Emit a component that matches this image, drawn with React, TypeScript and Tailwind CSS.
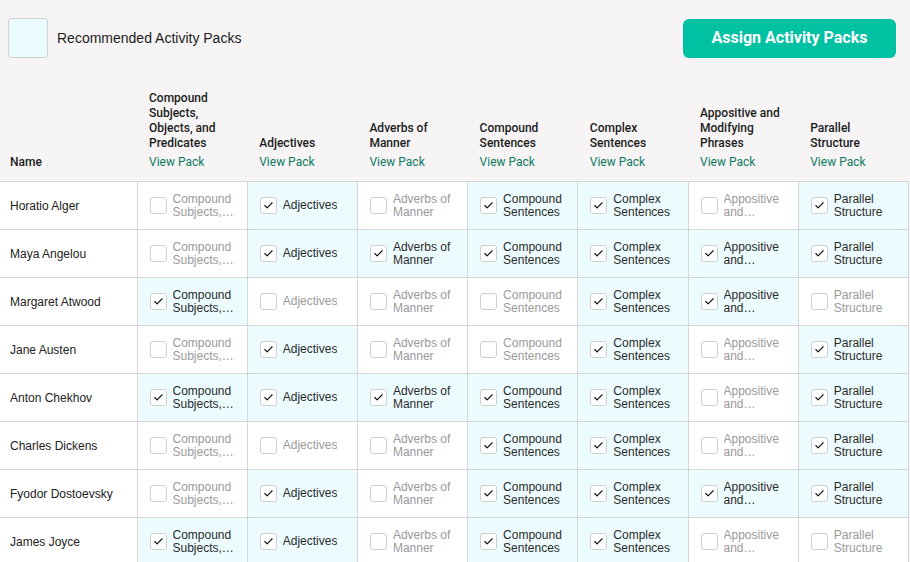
import { Check } from 'lucide-react'

const PACKS = [
  'Compound Subjects, Objects, and Predicates',
  'Adjectives',
  'Adverbs of Manner',
  'Compound Sentences',
  'Complex Sentences',
  'Appositive and Modifying Phrases',
  'Parallel Structure',
]

// 1 = pack recommended/assigned for that student, in PACKS order
const STUDENTS: { name: string; picks: number[] }[] = [
  { name: 'Horatio Alger', picks: [0, 1, 0, 1, 1, 0, 1] },
  { name: 'Maya Angelou', picks: [0, 1, 1, 1, 1, 1, 1] },
  { name: 'Margaret Atwood', picks: [1, 0, 0, 0, 1, 1, 0] },
  { name: 'Jane Austen', picks: [0, 1, 0, 0, 1, 0, 1] },
  { name: 'Anton Chekhov', picks: [1, 1, 1, 1, 1, 0, 1] },
  { name: 'Charles Dickens', picks: [0, 0, 0, 1, 1, 0, 1] },
  { name: 'Fyodor Dostoevsky', picks: [0, 1, 0, 1, 1, 1, 1] },
  { name: 'James Joyce', picks: [1, 1, 0, 1, 1, 0, 0] },
]

function PackCell({ label, checked }: { label: string; checked: boolean }) {
  return (
    <td
      className={`h-12 border border-[#d6d6d6] pl-3 pr-2 align-middle ${
        checked ? 'bg-[#ebfbfe]' : 'bg-white'
      }`}
    >
      <div className="flex items-center gap-[6px]">
        <span className="flex h-[17px] w-[17px] shrink-0 items-center justify-center rounded-[3px] border border-[#cfcfcf] bg-white">
          {checked && <Check className="h-[11px] w-[11px] text-[#111]" strokeWidth={2.5} />}
        </span>
        <span
          className={`line-clamp-2 text-[12px] leading-[13px] ${
            checked ? 'text-[#2b2b2b]' : 'text-[#9a9a9a]'
          }`}
        >
          {label}
        </span>
      </div>
    </td>
  )
}

export default function App() {
  return (
    <div className="min-h-screen w-[910px] overflow-hidden bg-[#f6f4f5] font-['Liberation_Sans',Arial,sans-serif] text-[#1c1c1c]">
      <div className="flex items-center justify-between pl-2 pr-[14px] pt-[18px]">
        <div className="flex items-center gap-[9px]">
          <div className="h-10 w-10 rounded-[4px] border border-[#d0d0d0] bg-[#eafbfe]" />
          <span className="text-[14px]">Recommended Activity Packs</span>
        </div>
        <button className="h-[39px] w-[213px] rounded-[6px] bg-[#00c2a2] font-['Roboto',sans-serif] text-[16px] font-bold text-white">
          Assign Activity Packs
        </button>
      </div>

      <table className="mt-[33px] w-[909px] table-fixed border-collapse">
        <colgroup>
          <col className="w-[137px]" />
          {PACKS.map((p) => (
            <col key={p} />
          ))}
        </colgroup>
        <thead>
          <tr>
            <th className="pb-[11px] pl-[10px] text-left align-bottom font-['Roboto',sans-serif] text-[12px] font-medium leading-[15px]">
              Name
            </th>
            {PACKS.map((p) => (
              <th
                key={p}
                className="pb-[11px] pl-3 pr-4 text-left align-bottom font-['Roboto',sans-serif] text-[12px] font-medium leading-[15px]"
              >
                <div>{p}</div>
                <div className="mt-1 font-normal text-[#0f7a63]">View Pack</div>
              </th>
            ))}
          </tr>
        </thead>
        <tbody>
          {STUDENTS.map((s) => (
            <tr key={s.name}>
              <td className="h-12 border border-l-0 border-[#d6d6d6] bg-white pl-[10px] text-[12px] text-[#222]">
                {s.name}
              </td>
              {PACKS.map((p, i) => (
                <PackCell key={p} label={p} checked={s.picks[i] === 1} />
              ))}
            </tr>
          ))}
        </tbody>
      </table>
    </div>
  )
}
